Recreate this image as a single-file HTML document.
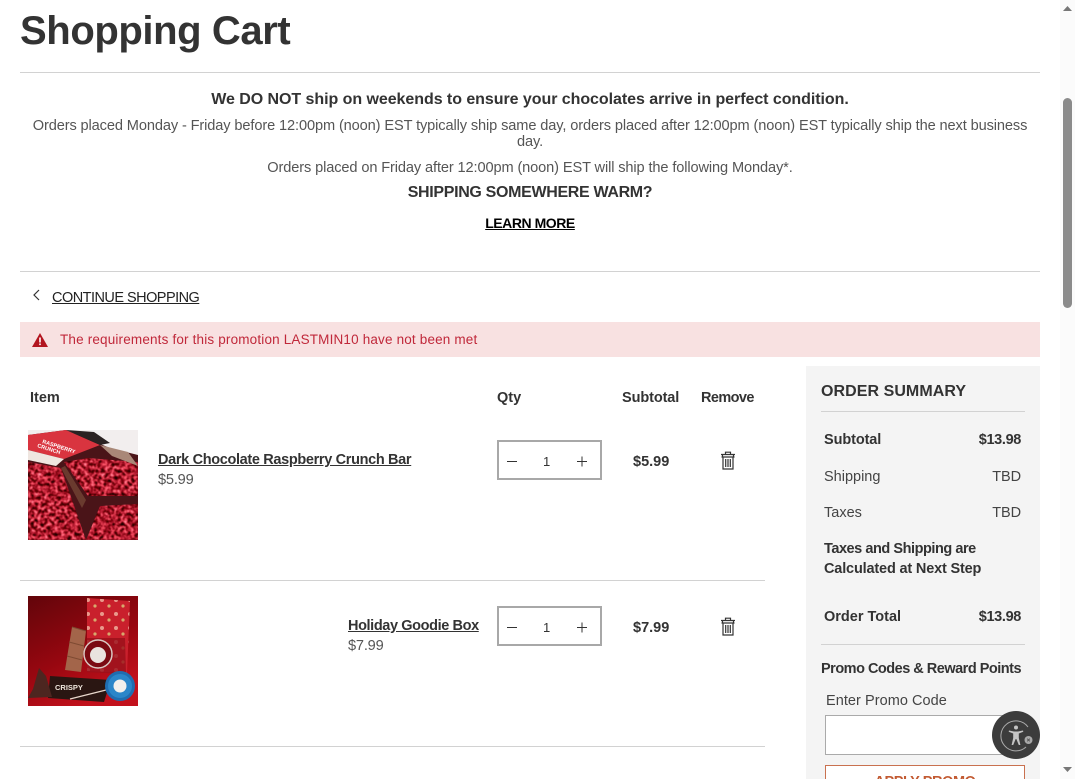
<!DOCTYPE html>
<html lang="en">
<head>
<meta charset="utf-8">
<title>Shopping Cart</title>
<style>
html,body{margin:0;padding:0;background:#fff;width:1075px;height:779px;overflow:hidden;}
body{position:relative;font-family:"Liberation Sans",sans-serif;color:#333;}
.t{position:absolute;white-space:nowrap;line-height:20px;margin:0;font-weight:400;}
.b{font-weight:700;}
.c{left:20px;width:1020px;text-align:center;}
.l{color:#555;font-size:14.6px;}
.r{position:absolute;background:#d2d2d2;height:1px;}
a{color:inherit;text-decoration:underline;}
.qty{position:absolute;left:497px;width:101px;height:36px;border:2px solid #a8a8a8;background:#fff;}
.side{position:absolute;left:806px;top:366px;width:234px;height:413px;background:#f4f4f4;}
svg{position:absolute;display:block;}
</style>
</head>
<body>
<h1 class="t b" style="left:20px;top:8px;line-height:46px;font-size:40px;letter-spacing:-.4px;color:#333">Shopping Cart</h1>
<div class="r" style="left:20px;top:72px;width:1020px"></div>

<p class="t b c" style="top:90px;font-size:16px;letter-spacing:-.05px">We DO NOT ship on weekends to ensure your chocolates arrive in perfect condition.</p>
<p class="t c l" style="top:116px;letter-spacing:-.117px">Orders placed Monday - Friday before 12:00pm (noon) EST typically ship same day, orders placed after 12:00pm (noon) EST typically ship the next business</p>
<p class="t c l" style="top:132px;letter-spacing:-.12px">day.</p>
<p class="t c l" style="top:158px;letter-spacing:-.12px">Orders placed on Friday after 12:00pm (noon) EST will ship the following Monday*.</p>
<p class="t b c" style="top:183px;font-size:16px;letter-spacing:-.33px">SHIPPING SOMEWHERE WARM?</p>
<p class="t b c" style="top:213px;font-size:14px;letter-spacing:-.45px;color:#000"><a href="#">LEARN MORE</a></p>
<div class="r" style="left:20px;top:271px;width:1020px"></div>

<svg style="left:30px;top:288px" width="14" height="14" viewBox="0 0 14 14"><path d="M9 2 L4 7 L9 12" fill="none" stroke="#333" stroke-width="1.2"/></svg>
<a class="t" href="#" style="left:52px;top:288px;font-size:14.5px;letter-spacing:-.53px;color:#222">CONTINUE SHOPPING</a>

<div style="position:absolute;left:20px;top:322px;width:1020px;height:35px;background:#f8e1e1"></div>
<svg style="left:32px;top:333px" width="16" height="14" viewBox="0 0 16 14"><path d="M8 0 L16 14 L0 14 Z" fill="#b3151f"/><rect x="7.2" y="4.5" width="1.6" height="5" fill="#fff"/><rect x="7.2" y="10.5" width="1.6" height="1.6" fill="#fff"/></svg>
<div class="t" style="left:60px;top:330px;font-size:13.5px;color:#c0283a;letter-spacing:.17px">The requirements for this promotion LASTMIN10 have not been met</div>

<div class="t b" style="left:30px;top:388px;font-size:14.5px">Item</div>
<div class="t b" style="left:497px;top:388px;font-size:14.5px">Qty</div>
<div class="t b" style="left:622px;top:388px;font-size:14.5px;letter-spacing:-.1px">Subtotal</div>
<div class="t b" style="left:701px;top:388px;font-size:14.5px;letter-spacing:-.6px">Remove</div>

<!-- Item 1 image -->
<svg style="left:28px;top:430px" width="110" height="110" viewBox="0 0 110 110">
<defs>
<filter id="rasp1" x="0" y="0" width="100%" height="100%" color-interpolation-filters="sRGB">
<feTurbulence type="fractalNoise" baseFrequency=".3" numOctaves="3" seed="7"/>
<feColorMatrix values="2.2 0 0 0 -.42  1.5 0 0 0 -.66  1.5 0 0 0 -.58  0 0 0 0 1"/>
<feGaussianBlur stdDeviation=".5"/>
</filter>
</defs>
<rect width="110" height="110" fill="#f2eeee"/>
<path d="M0 5 L38 0 L82 18 L110 25 L110 110 L0 110Z" fill="#4a1418"/>
<rect y="0" width="110" height="110" filter="url(#rasp1)" clip-path="polygon(0 32px,33px 38px,58px 110px,0 110px)"/>
<rect y="0" width="110" height="110" filter="url(#rasp1)" clip-path="polygon(36px 32px,60px 28px,110px 32px,110px 66px,60px 66px)"/>
<rect y="0" width="110" height="110" filter="url(#rasp1)" clip-path="polygon(72px 76px,110px 74px,110px 110px,58px 110px)"/>
<path d="M0 5 L38 0 L72 15 L36 29 L0 20Z" fill="#d9343f"/>
<path d="M0 20 L36 29 L28 36 L0 30Z" fill="#efe6e0"/>
<path d="M38 0 L66 2 L82 13 L72 15 Z" fill="#2a2222"/>
<path d="M72 15 L100 22 L110 36 L84 26 Z" fill="#a98878"/>
<path d="M33 38 L37 36 L58 70 L54 78 Z" fill="#6a3a2e"/>
<text x="14" y="13" font-size="5.5" font-weight="700" fill="#fff" font-family="Liberation Sans,sans-serif" transform="rotate(18 14 13)">RASPBERRY</text>
<text x="9" y="17" font-size="5.5" font-weight="700" fill="#fff" font-family="Liberation Sans,sans-serif" transform="rotate(18 9 17)">CRUNCH</text>
</svg>
<a class="t" href="#" style="left:158px;top:450px;font-size:14.5px;font-weight:700;letter-spacing:-.34px;color:#333">Dark Chocolate Raspberry Crunch Bar</a>
<div class="t l" style="left:158px;top:470px;letter-spacing:-.2px">$5.99</div>

<div class="qty" style="top:440px"></div>
<svg style="left:497px;top:440px" width="105" height="40" viewBox="0 0 105 40"><path d="M10 21.5H20M80 21.5H90M85 16.5V26.5" stroke="#333" stroke-width="1" fill="none"/></svg>
<div class="t" style="left:543px;top:452px;font-size:13px">1</div>
<div class="t b" style="left:633px;top:452px;font-size:14.5px">$5.99</div>
<svg style="left:720px;top:451px" width="16" height="19" viewBox="0 0 16 19"><path d="M5.5 3V1.2H10.5V3M1 3.5H15M2.5 3.5V6M13.5 3.5V6M1.5 6H14.5M3 6V18H13V6M5.7 8V16M8 8V16M10.3 8V16" fill="none" stroke="#333" stroke-width="1.2"/></svg>

<div class="r" style="left:20px;top:580px;width:745px"></div>

<!-- Item 2 image -->
<svg style="left:28px;top:596px" width="110" height="110" viewBox="0 0 110 110">
<defs>
<linearGradient id="bg2" x1="0" y1="0" x2=".5" y2="1"><stop offset="0" stop-color="#62050a"/><stop offset=".6" stop-color="#980710"/><stop offset="1" stop-color="#c2111c"/></linearGradient>
<pattern id="dots" width="14" height="14" patternUnits="userSpaceOnUse"><rect width="14" height="14" fill="#c9202c"/><circle cx="4" cy="4" r="2" fill="#e99a8c"/><circle cx="11" cy="10" r="1.6" fill="#d8a86c"/></pattern>
</defs>
<rect width="110" height="110" fill="url(#bg2)"/>
<path d="M59 2 L102 5 L99 77 L59 75Z" fill="url(#dots)"/>
<path d="M59 42 L97 42 L98 78 L59 76Z" fill="#98101a" opacity=".8"/>
<path d="M44 31 L58 35 L53 76 L37 74Z" fill="#a3654a"/>
<path d="M44 31 L58 35 M41 46 L56 50 M39 60 L54 64" stroke="#7e4a32" stroke-width="1" fill="none"/>
<circle cx="70" cy="58" r="14" fill="#7a0a12" stroke="#d9c8c2" stroke-width="1.5"/>
<circle cx="70" cy="59" r="8" fill="#e9e3de"/>
<path d="M22 80 L83 84 L76 106 L20 102Z" fill="#2a1612"/>
<text x="27" y="94" font-size="7.5" font-weight="700" fill="#efe6dc" font-family="Liberation Sans,sans-serif">CRISPY</text>
<path d="M0 102 L5 93 L11 72 L18 80 L24 101 Z" fill="#4d2620"/>
<path d="M42 103 L82 93" stroke="#e8d8cc" stroke-width="1.2"/>
<circle cx="92" cy="90" r="15" fill="#1f6db0"/>
<circle cx="92" cy="90" r="12" fill="#2b86c9"/>
<circle cx="92" cy="90" r="6.5" fill="#f2f0ec"/>
</svg>
<a class="t" href="#" style="left:348px;top:616px;font-size:14.5px;font-weight:700;letter-spacing:-.39px;color:#333">Holiday Goodie Box</a>
<div class="t l" style="left:348px;top:636px;letter-spacing:-.2px">$7.99</div>

<div class="qty" style="top:606px"></div>
<svg style="left:497px;top:606px" width="105" height="40" viewBox="0 0 105 40"><path d="M10 21.5H20M80 21.5H90M85 16.5V26.5" stroke="#333" stroke-width="1" fill="none"/></svg>
<div class="t" style="left:543px;top:618px;font-size:13px">1</div>
<div class="t b" style="left:633px;top:618px;font-size:14.5px">$7.99</div>
<svg style="left:720px;top:617px" width="16" height="19" viewBox="0 0 16 19"><path d="M5.5 3V1.2H10.5V3M1 3.5H15M2.5 3.5V6M13.5 3.5V6M1.5 6H14.5M3 6V18H13V6M5.7 8V16M8 8V16M10.3 8V16" fill="none" stroke="#333" stroke-width="1.2"/></svg>

<div class="r" style="left:20px;top:746px;width:745px"></div>

<!-- Summary -->
<div class="side"></div>
<div class="t b" style="left:821px;top:382px;font-size:16px;letter-spacing:.06px">ORDER SUMMARY</div>
<div class="r" style="left:821px;top:411px;width:204px"></div>
<div class="t b" style="left:824px;top:430px;font-size:14.5px;letter-spacing:-.1px">Subtotal</div>
<div class="t b" style="right:54px;top:430px;font-size:14.5px;letter-spacing:-.35px">$13.98</div>
<div class="t" style="left:824px;top:467px;font-size:14.5px;color:#444">Shipping</div>
<div class="t" style="right:54px;top:467px;font-size:14.5px;color:#444;letter-spacing:-.1px">TBD</div>
<div class="t" style="left:824px;top:503px;font-size:14.5px;color:#444">Taxes</div>
<div class="t" style="right:54px;top:503px;font-size:14.5px;color:#444;letter-spacing:-.1px">TBD</div>
<div class="t b" style="left:824px;top:539px;font-size:14.5px;letter-spacing:-.45px">Taxes and Shipping are</div>
<div class="t b" style="left:824px;top:559px;font-size:14.5px;letter-spacing:-.17px">Calculated at Next Step</div>
<div class="t b" style="left:824px;top:607px;font-size:14.5px">Order Total</div>
<div class="t b" style="right:54px;top:607px;font-size:14.5px;letter-spacing:-.35px">$13.98</div>
<div class="r" style="left:821px;top:644px;width:204px"></div>
<div class="t b" style="left:821px;top:659px;font-size:14.5px;letter-spacing:-.5px">Promo Codes &amp; Reward Points</div>
<div class="t" style="left:826px;top:691px;font-size:14.5px;color:#444;letter-spacing:.05px">Enter Promo Code</div>
<div style="position:absolute;left:825px;top:715px;width:198px;height:38px;background:#fff;border:1px solid #aaa"></div>
<div style="position:absolute;left:825px;top:765px;width:198px;height:30px;background:#fff;border:1px solid #c9714f;color:#c25a32;font-weight:700;font-size:14.5px;text-align:center;line-height:33px;letter-spacing:-.4px">APPLY PROMO</div>

<!-- Accessibility widget -->
<svg style="left:992px;top:711px" width="48" height="48" viewBox="0 0 48 48">
<circle cx="24" cy="24" r="24" fill="#3c3c3c"/>
<path d="M36 16 A15 15 0 1 0 34 36" fill="none" stroke="#aaa" stroke-width="1"/>
<circle cx="24" cy="16.5" r="2" fill="#c4c4c4"/>
<path d="M17 19.5 L22 20.5 H26 L31 19.5 L31.3 20.8 L26.8 22.5 V27 L28.4 34 H26.8 L24.3 28 H23.7 L21.2 34 H19.6 L21.2 27 V22.5 L16.7 20.8Z" fill="#c4c4c4"/>
<circle cx="36.5" cy="29" r="4" fill="#a8a8a8"/>
<path d="M35.2 27.7 L37.8 30.3 M37.8 27.7 L35.2 30.3" stroke="#555" stroke-width="1"/>
</svg>

<!-- Scrollbar -->
<div style="position:absolute;left:1060px;top:0;width:15px;height:779px;background:#fbfbfb"></div>
<div style="position:absolute;left:1063px;top:98px;width:9px;height:210px;background:#8b8b8b;border-radius:5px"></div>
<svg style="left:1062px;top:5px" width="11" height="7" viewBox="0 0 11 7"><path d="M5.5 1 L10 6 H1Z" fill="#777"/></svg>
<svg style="left:1062px;top:766px" width="11" height="7" viewBox="0 0 11 7"><path d="M1 1 H10 L5.5 6Z" fill="#777"/></svg>
</body>
</html>
